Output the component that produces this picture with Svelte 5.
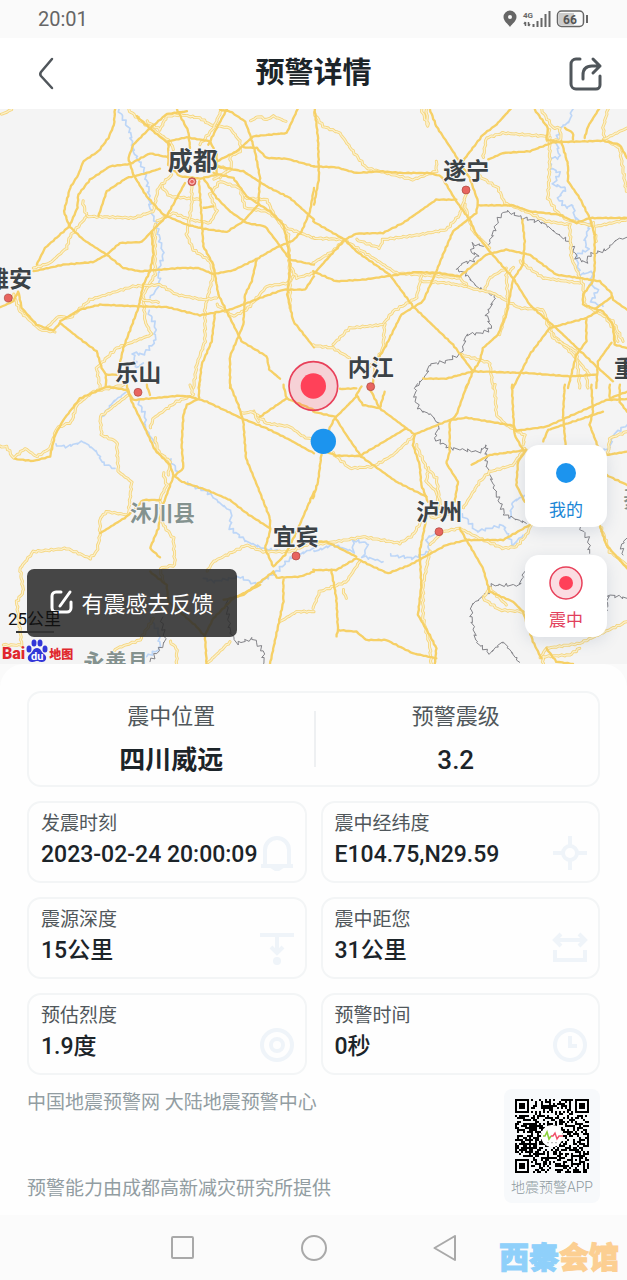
<script lang="ts">
    // map data is split in four tiles, coordinates are thirds of a pixel
    const tiles = [
        {
            x: 0,
            y: 0,
            major: [
                "345,3 342,50 325,90 295,130 250,160 235,200 210,240 192,310 208,355 250,395 320,440 370,480 420,490 540,480 595,480 640,498 700,487 770,453 830,418 880,397 905,370 930,310 942,240",
                "110,470 135,420 208,355 232,300 235,260 270,215 330,175 390,168 450,136 505,148",
                "100,490 190,470 280,462 320,440 360,405 425,402 460,365 500,325 555,225",
                "295,325 320,250 380,210 440,195 480,182",
                "560,10 500,18 440,70 400,110 385,150 400,200 440,265 490,320 560,350 610,362 680,372 730,340 775,290 780,210 765,130 750,80 735,40 690,10 660,5",
                "505,100 560,88 630,100 650,140 650,200 600,212 540,205 505,170 505,100",
                "530,3 565,70 570,120",
                "410,25 460,70 510,110",
                "680,5 650,60 625,110",
                "893,3 860,75 760,85 710,130 650,160",
                "730,118 770,120 800,150 860,152 942,175",
                "650,175 730,190 800,235 870,270 942,335",
                "610,210 650,270 690,310 740,345 795,355 830,400 870,455 942,470",
                "640,195 700,210 740,265 810,310 850,350 865,420 870,480 862,560 880,640 942,718",
                "597,220 605,330 610,415 640,470 655,560 690,630 725,700 800,745 808,785 840,812",
                "770,455 755,520 735,560 730,650 690,745 690,840",
                "455,375 460,440 450,490 430,530 415,600 370,720 360,765",
                "180,640 240,605 300,590 415,595 500,597 600,622 690,605 780,570 850,545 915,545 942,505",
                "0,598 40,580 55,550 65,600 110,650 160,668 180,645 230,685 290,730 305,780 318,800 360,800",
                "318,800 318,840",
                "645,615 635,700 605,770 597,840",
                "610,300 640,295",
            ],
            minor: [
                "3,20 35,5",
                "385,5 430,45 510,100 520,125",
                "440,40 480,65 500,25 540,20 600,30 630,50 690,60 720,100 722,130 690,145 695,180 660,210",
                "665,5 640,60 600,110",
                "750,40 775,25 800,35 820,25 858,40",
                "248,280 260,325 210,385 200,420 150,465 100,480",
                "260,325 400,330 460,310 475,240 515,200",
                "485,235 510,265 600,275",
                "470,340 520,315 570,335 630,345 650,310 630,260 660,220 720,240 735,300 800,310 830,330 860,360 942,390",
                "575,220 575,290 560,380 580,425 630,460 640,500 615,600 615,700 590,770 580,840",
                "465,350 465,500 430,560 435,640 455,680 350,720 290,780 300,840",
                "140,660 175,625 210,630 270,575 400,535 480,530 530,560 610,575 650,570",
                "650,590 700,625 740,605 800,535 865,525 885,500",
                "870,470 890,510 942,495",
                "735,270 800,275 825,325 865,380 870,530 870,600",
                "40,560 60,610 120,665 165,672",
                "425,575 475,583",
                "640,215 690,185 640,170",
            ],
            rivers: [
                "355,3 390,70 400,130 430,180 445,240 450,300 470,350 480,400 490,440 475,490 480,530 450,570",
                "445,610 465,650 465,700 430,740 400,735 410,780 430,765",
            ],
            borders: [],
        },
        {
            x: 939,
            y: 0,
            major: [
                "5,3 15,90 18,210 3,290",
                "0,175 70,178 130,195 200,190 270,195 350,195 385,205 430,280 470,335 490,380 530,430 600,510 650,590 700,635 740,670 850,775 900,820",
                "350,3 370,55 420,130 470,210 495,280 490,315 420,370 390,440 370,490 330,580 265,620 215,720 190,760",
                "593,3 550,50 510,80 445,165",
                "525,155 570,135 650,130 720,103 870,98 920,110 942,150",
                "665,5 705,60 700,95 740,102",
                "858,3 825,55 815,90",
                "745,100 765,170 765,220 800,270 830,330 845,380 845,480 840,520 810,560 810,590 870,610 900,650 905,710 942,720",
                "755,60 780,75 780,95",
                "495,292 600,292 650,310 740,320 790,345 830,330 942,330",
                "0,340 95,395 130,430 230,500 300,595 420,710 480,790",
                "0,500 95,395 130,377 210,375 270,345 370,275 430,275",
                "0,490 70,520 150,515 310,492 380,495 440,505 520,440 580,425 650,440 730,500 800,510 860,520 895,555 900,575 942,605",
                "895,568 850,600",
                "628,335 635,400 630,470 600,515 580,620 555,680 510,720 500,760 480,790 460,840",
                "330,812 400,812 480,790 640,795 770,805 850,800",
                "600,840 650,740 710,660 820,630 855,610",
                "820,635 820,700 790,740 765,840",
                "895,705 855,760 850,840",
                "185,770 180,830",
            ],
            minor: [
                "3,15 30,55 80,75 120,130 160,180 260,205 300,215 370,190 370,160",
                "510,150 520,90 570,75 700,85",
                "685,5 720,60 740,60 745,95 705,100 710,65",
                "885,3 870,60 875,95 920,120 940,250",
                "870,95 942,60",
                "710,90 710,170 705,270 730,310 760,335 850,355 942,335",
                "500,205 555,240 575,285 640,310 700,340 770,350",
                "0,390 95,395 60,430 0,465",
                "130,395 200,420 210,395 320,380 400,365 440,320 465,240",
                "100,400 180,450 250,495 320,500 440,510 470,540 540,555 620,600 690,605 720,680 780,740 830,800",
                "325,505 310,570 240,610 210,650 110,660 60,710",
                "0,712 60,720 110,750",
                "325,520 400,525 460,535",
                "215,650 210,720 190,760 150,790",
                "600,480 580,500 585,590 560,680",
                "620,460 690,510 800,525",
                "515,545 530,510 580,480",
                "770,350 775,450 810,530 815,590 900,640 930,700",
                "700,640 720,690 790,730 800,840",
                "820,800 825,840",
                "445,740 530,765 540,840",
                "325,3 345,55 340,5",
                "840,345 850,400",
                "455,290 480,370 530,420",
                "880,630 900,660 915,700",
            ],
            rivers: [
                "778,5 770,40 740,60 730,100 740,150 710,150 712,180 740,195 720,230 760,240 735,270 760,300 780,290 785,330 830,350 815,400 825,425 790,440 800,500 840,490 830,530 855,545 835,580 870,595",
            ],
            borders: [
                "942,390 910,395 880,425 830,440 820,465 790,450 775,405 730,375 690,345 630,330 580,308 560,325 545,365 525,415 480,408 475,435 495,440 480,460 450,465 430,485 455,495 490,535 548,565 520,620 535,660 510,675 460,680 445,735 400,760 350,770 340,800 310,835",
            ],
        },
        {
            x: 0,
            y: 831,
            major: [
                "45,222 100,228 150,215 165,150 190,105 240,40 320,5 380,15 400,45 540,32 570,35 620,50 725,100 800,130 870,165 942,205",
                "380,0 395,50 435,130 465,195 510,240 520,270 545,290 620,315 690,345 740,385 810,430",
                "597,0 597,40 560,60 550,90 545,180 550,250 520,275 485,370 475,430 450,490 480,517",
                "690,0 715,60 730,110 738,220 775,310 810,400 810,440 795,490 820,545 855,510 890,440 942,320",
                "440,0 450,30",
                "850,0 860,40 780,95",
                "860,40 942,75",
                "300,445 380,395 430,345 480,345",
                "670,645 730,630 820,560 830,578 900,575 942,560",
                "850,585 850,650 835,720 810,837",
                "450,560 500,600 505,650 590,725 615,755 620,837",
                "780,600 700,640 640,700 615,750",
            ],
            minor: [
                "0,185 20,185 40,220 75,190 110,215 150,190 170,130 215,110 230,60 280,20 370,0",
                "385,30 300,95 305,150 350,170 355,260 395,290 385,390 320,380 300,400 300,450 290,500 270,520 200,490 100,500 60,550 70,620 50,650 65,780 10,780",
                "450,130 460,100 530,50 580,30 570,0",
                "760,80 800,115 870,125 910,155 942,165",
                "490,265 500,300 480,340 490,420 520,460 525,540 480,550 490,590",
                "620,560 640,530 740,480 790,500 870,500 942,470",
                "330,810 350,790 420,765 460,700",
                "510,770 530,790 530,837",
                "620,837 690,770",
                "840,710 890,680 942,680",
                "465,160 475,200 510,230 505,270",
                "725,85 760,80 775,110",
            ],
            rivers: [
                "165,180 200,185 250,170 290,200 310,235 345,250",
                "375,25 340,50 305,95",
                "415,50 435,90 435,130 465,175",
                "510,225 535,260",
                "560,295 620,320 660,355 695,380 690,430 740,470 790,490 850,500",
                "942,490 870,520 830,560 770,600 720,575 640,590 610,580",
                "450,700 475,740 480,790 440,815",
            ],
            borders: [
                "680,650 685,700 690,740 710,775 760,760 790,800 790,837",
                "485,700 495,770 450,830",
            ],
        },
        {
            x: 939,
            y: 831,
            major: [
                "0,80 65,95 100,150 145,215 250,290 340,335",
                "145,5 130,30 150,60 200,70 215,20",
                "80,12 130,10",
                "130,35 65,100 40,150",
                "170,10 200,70 305,148 300,180 320,240 325,300 345,350",
                "305,148 410,105 460,98 600,122 610,137 700,125 790,85 880,45 942,42",
                "40,200 70,212 140,213 280,130",
                "25,210 15,290 0,340",
                "462,0 430,90 410,110 410,200 400,235 435,290 425,350",
                "597,0 600,80 605,150 630,195",
                "475,240 530,210 640,195 615,230 610,300 635,350",
                "755,0 750,90 758,185",
                "690,170 705,135 870,80",
                "835,0 840,80 830,120 855,185",
                "880,210 942,200",
                "880,270 942,300",
                "890,0 890,40 942,20",
                "920,0 920,50 942,80",
                "0,555 70,555 130,520 170,540 225,565 290,540 400,480 460,465 570,465 650,420",
                "0,470 40,470 80,490 130,515",
                "340,400 320,500 325,600 315,690 350,750 370,790 365,837",
                "440,430 510,550 530,620 600,650 630,680 660,770 685,820",
                "70,755 75,735 130,740 160,765 220,765 300,805 370,820",
                "55,555 70,640 75,735",
                "860,420 880,480 942,550",
                "700,790 730,830 780,837",
            ],
            minor: [
                "60,205 110,250 180,245 240,210 305,150",
                "310,180 345,260 340,290 370,320 380,370",
                "345,250 370,280 382,360",
                "450,370 500,290 530,260 600,240 635,190",
                "545,0 550,90 580,120 635,150 630,180",
                "0,480 100,465 150,455 260,475 300,450 330,400",
                "350,480 390,440 440,430 500,460 570,490 610,485 640,450 655,420",
                "140,530 100,590 20,620 0,670",
                "90,615 100,640",
                "350,500 330,600 330,700 350,780 355,837",
                "510,640 530,610 580,660",
                "510,640 560,675 630,680",
                "680,820 700,790 800,775 942,710",
                "690,837 690,815 770,810 800,790",
                "885,210 890,160 942,140",
                "865,430 890,500 942,540",
                "340,370 360,400 420,380",
            ],
            rivers: [
                "0,500 60,480 120,500 120,465 165,475 150,515 210,530",
                "230,510 300,520 350,500 340,460 380,440",
                "445,390 460,400 490,440 570,420 600,480 630,450",
                "640,330 600,350 590,400",
                "870,195 890,190 900,150 942,120",
            ],
            borders: [
                "310,0 305,40 320,75 355,90 380,120 365,160 410,190 500,200 520,180 520,240 545,310 575,390 640,415",
                "800,425 825,460 830,505",
                "635,560 620,600 530,600 525,625 475,660 475,700 490,770 530,805 570,770 620,832",
                "880,680 885,630 942,640",
                "942,460 925,480 930,510",
            ],
        },
    ];

    const cities = [
        { name: "成都", x: 503, y: 186, size: 75, dot: [576, 221] },
        { name: "遂宁", x: 1330, y: 213, size: 69, dot: [1398, 246] },
        { name: "雅安", x: -42, y: 537, size: 69, dot: [25, 570] },
        { name: "乐山", x: 346, y: 820, size: 69, dot: [414, 853] },
        { name: "内江", x: 1043, y: 803, size: 69, dot: [1112, 836] },
        { name: "宜宾", x: 818, y: 1311, size: 69, dot: [888, 1344] },
        { name: "泸州", x: 1249, y: 1237, size: 69, dot: [1317, 1271] },
        { name: "重庆", x: 1842, y: 808, size: 69 },
    ];

    const counties = [
        { name: "沐川县", x: 390, y: 1238 },
        { name: "永善县", x: 250, y: 1687 },
        { name: "綦江", x: 1870, y: 1196 },
    ];

    // breaks every segment up so that rivers and borders look winding
    function winding(points: string, size: number) {
        const list = points.split(" ").map((p) => p.split(",").map(Number));
        const out: string[] = [];
        let n = 0;
        for (let i = 0; i < list.length - 1; i++) {
            const [ax, ay] = list[i];
            const [bx, by] = list[i + 1];
            const steps = Math.max(2, Math.round(Math.hypot(bx - ax, by - ay) / 8));
            for (let j = 0; j < steps; j++) {
                n++;
                const x = ax + ((bx - ax) * j) / steps + Math.sin(n * 2.3) * size;
                const y = ay + ((by - ay) * j) / steps + Math.cos(n * 3.7) * size;
                out.push(`${x.toFixed(1)},${y.toFixed(1)}`);
            }
        }
        out.push(list[list.length - 1].join(","));
        return out.join(" ");
    }

    // QR code, 37 x 37 modules
    const qrSize = 37;

    function finder(x: number, y: number) {
        const d = Math.max(Math.abs(x - 3), Math.abs(y - 3));
        return d !== 2 && d !== 4;
    }

    function isDark(x: number, y: number) {
        const far = qrSize - 8;
        if (x < 8 && y < 8) return finder(x, y);
        if (x >= far && y < 8) return finder(x - far - 1, y);
        if (x < 8 && y >= far) return finder(x, y - far - 1);
        const a = Math.max(Math.abs(x - 30), Math.abs(y - 30));
        if (a < 3) return a !== 1;
        if (x === 6 || y === 6) return (x + y) % 2 === 0;
        const r = Math.sin(x * 12.9898 + y * 78.233) * 43758.5453;
        return r - Math.floor(r) < 0.52;
    }

    let qrPath = "";
    for (let y = 0; y < qrSize; y++) {
        for (let x = 0; x < qrSize; x++) {
            if (isDark(x, y)) qrPath += `M${x} ${y}h1v1h-1z`;
        }
    }

    const details = [
        { label: "发震时刻", value: "2023-02-24 20:00:09", icon: "bell" },
        { label: "震中经纬度", value: "E104.75,N29.59", icon: "target" },
        { label: "震源深度", value: "15公里", icon: "depth" },
        { label: "震中距您", value: "31公里", icon: "distance" },
        { label: "预估烈度", value: "1.9度", icon: "rings" },
        { label: "预警时间", value: "0秒", icon: "clock" },
    ];
</script>

<div class="page">
    <div class="status">
        <span>20:01</span>
        <svg width="86" height="24" viewBox="0 0 86 24" aria-hidden="true">
            <path
                d="M7 3.500a6.500 6.500 0 0 0-6.500 6.500c0 4 4.500 7 6.500 10 2-3 6.500-6 6.500-10a6.500 6.500 0 0 0-6.500-6.500z"
                fill="#666"
            />
            <circle cx="7" cy="10" r="2" fill="#fafafa" />
            <text x="20" y="11" font-size="8" font-weight="700" fill="#666">4G</text>
            <path
                d="M22.500 15v4M21 17l1.500-2M25.500 15v4M27 17l-1.500 2"
                stroke="#666"
                stroke-width="1.500"
                fill="none"
            />
            <path
                d="M30.500 17v3M34.500 14v6M38.500 11v9M42.500 7v13M46.500 4v16"
                stroke="#666"
                stroke-width="2"
            />
            <rect x="56" y="6" width="15" height="12" fill="#ccc" />
            <rect
                x="54.500"
                y="4"
                width="26"
                height="15.500"
                rx="4"
                fill="none"
                stroke="#666"
                stroke-width="1.500"
            />
            <path d="M84 8v8" stroke="#666" stroke-width="2" />
            <text x="60" y="16.500" font-size="12" font-weight="700" fill="#555">66</text>
        </svg>
    </div>

    <header>
        <button class="icon-button" aria-label="返回">
            <svg width="36" height="36" viewBox="0 0 36 36">
                <path
                    d="M28 3L17 16q-1.500 2 0 4L28 32"
                    fill="none"
                    stroke="#50565b"
                    stroke-width="2.500"
                    stroke-linecap="round"
                />
            </svg>
        </button>
        <h1>预警详情</h1>
        <button class="icon-button" aria-label="分享">
            <svg width="36" height="36" viewBox="0 0 36 36">
                <g
                    fill="none"
                    stroke="#50565b"
                    stroke-width="3"
                    stroke-linecap="round"
                    stroke-linejoin="round"
                >
                    <path d="M13 3H9a5 5 0 0 0-5 5v20a5 5 0 0 0 5 5h20a4 4 0 0 0 4-4v-9" />
                    <path d="M16 23v-4q0-9 9-9h8M26 3l7 7-7 7" />
                </g>
            </svg>
        </button>
    </header>

    <div class="map">
        <svg class="canvas" viewBox="0 3 1881 1665" preserveAspectRatio="xMidYMid slice">
            {#each tiles as tile}
                <g transform="translate({tile.x} {tile.y})" class="lines">
                    {#each tile.rivers as points}
                        <polyline class="river" points={winding(points, 4)} />
                    {/each}
                    {#each tile.borders as points}
                        <polyline class="border" points={winding(points, 5)} />
                    {/each}
                    {#each tile.minor as points}
                        <polyline class="minor" points={winding(points, 2)} />
                        <polyline class="minor-core" points={winding(points, 2)} />
                    {/each}
                    {#each tile.major as points}
                        <polyline class="major" points={winding(points, 1)} />
                    {/each}
                </g>
            {/each}

            {#each counties as c}
                <text class="county" x={c.x} y={c.y}>{c.name}</text>
            {/each}
            {#each cities as c}
                {#if c.dot}
                    <circle class="dot" cx={c.dot[0]} cy={c.dot[1]} r="12" />
                {/if}
                <text class="city" x={c.x} y={c.y} font-size={c.size}>{c.name}</text>
            {/each}
            <circle cx="576" cy="221" r="7" fill="none" stroke="#fff" stroke-width="2" />

            <circle cx="940" cy="834" r="73" fill="#ff4560" fill-opacity="0.2" stroke="#e8405a" stroke-width="5" />
            <circle cx="940" cy="834" r="38" fill="#ff4159" />
            <circle cx="970" cy="1000" r="38" fill="#1c94ee" />
        </svg>

        <button class="feedback">
            <svg width="24" height="26" viewBox="0 0 24 26">
                <g
                    fill="none"
                    stroke="#fff"
                    stroke-width="3"
                    stroke-linecap="round"
                    stroke-linejoin="round"
                >
                    <path d="M11 3H6a4 4 0 0 0-4 4v12a4 4 0 0 0 4 4h11a4 4 0 0 0 4-4v-6" />
                    <path d="M20 3L10 17" />
                </g>
            </svg>
            有震感去反馈
        </button>

        <div class="scale">25公里</div>

        <div class="baidu">
            <span>Bai</span>
            <svg width="22" height="24" viewBox="0 0 22 24">
                <g fill="#3236d8">
                    <ellipse cx="3" cy="10" rx="2.500" ry="3.500" />
                    <ellipse cx="8" cy="4" rx="2.500" ry="3.500" />
                    <ellipse cx="14" cy="4" rx="2.500" ry="3.500" />
                    <ellipse cx="19" cy="10" rx="2.500" ry="3.500" />
                    <path d="M11 9c4 0 4 4 7 6 4 3 2 8-2 8-3 0-3-1-5-1s-2 1-5 1c-4 0-6-5-2-8 3-2 3-6 7-6z" />
                </g>
                <text x="5" y="21" font-size="11" font-weight="700" fill="#fff">du</text>
            </svg>
            <span class="small">地图</span>
        </div>

        <div class="locate">
            <button class="mine">
                <svg width="36" height="36" viewBox="0 0 36 36">
                    <circle cx="18" cy="18" r="10" fill="#1c94ee" />
                </svg>
                我的
            </button>
            <button class="center">
                <svg width="36" height="36" viewBox="0 0 36 36">
                    <circle cx="18" cy="18" r="16" fill="#fbdde2" stroke="#e8405a" stroke-width="1.500" />
                    <circle cx="18" cy="18" r="7" fill="#ff4159" />
                </svg>
                震中
            </button>
        </div>
    </div>

    <main>
        <section class="summary">
            <div>
                <p>震中位置</p>
                <strong>四川威远</strong>
            </div>
            <div>
                <p>预警震级</p>
                <strong class="number">3.2</strong>
            </div>
        </section>

        <section class="details">
            {#each details as d}
                <div class="card">
                    <p>{d.label}</p>
                    <svg class="mark" width="36" height="36" viewBox="0 0 36 36" aria-hidden="true">
                        {#if d.icon === "bell"}
                            <path d="M6 31V15a12 12 0 0 1 24 0v16M2 31h32" />
                            <path d="M15 33h6l-3 2z" />
                        {:else if d.icon === "target"}
                            <circle cx="18" cy="18" r="7" />
                            <path d="M18 1v10M18 25v10M1 18h10M25 18h10" />
                        {:else if d.icon === "depth"}
                            <path d="M1 4h34M18 4v17M12 16l6 6 6-6" />
                            <circle class="solid" cx="18" cy="30" r="4" />
                        {:else if d.icon === "distance"}
                            <path d="M3 9h30M9 3L3 9l6 6M27 3l6 6-6 6M3 19v10h30V19" />
                        {:else if d.icon === "rings"}
                            <circle cx="18" cy="18" r="15" />
                            <circle cx="18" cy="18" r="6" />
                        {:else}
                            <circle cx="18" cy="18" r="15" />
                            <path d="M18 9v10h7" />
                        {/if}
                    </svg>
                    <strong>{d.value}</strong>
                </div>
            {/each}
        </section>

        <footer>
            <div class="credits">
                <p>中国地震预警网 大陆地震预警中心</p>
                <p>预警能力由成都高新减灾研究所提供</p>
            </div>
            <div class="qr">
                <svg width="74" height="74" viewBox="0 0 37 37" role="img" aria-label="地震预警APP">
                    <path d={qrPath} shape-rendering="crispEdges" />
                    <circle cx="18.500" cy="18.500" r="5.500" fill="#fff" />
                    <path
                        d="M14 18.500h1l1-2 1 3.500 1-1.500"
                        fill="none"
                        stroke="#8bd03c"
                        stroke-width="0.800"
                    />
                    <path
                        d="M18 18.500h1l1-1.500 1 3 1-1.500h2"
                        fill="none"
                        stroke="#f0506a"
                        stroke-width="0.700"
                    />
                    <path d="M16 21.800h5" stroke="#bbb" stroke-width="0.600" stroke-dasharray="1 1" />
                </svg>
                <span>地震预警APP</span>
            </div>
        </footer>
    </main>

    <nav>
        <button aria-label="最近任务">
            <svg width="26" height="26" viewBox="0 0 26 26">
                <rect x="2" y="2" width="21" height="21" rx="1" />
            </svg>
        </button>
        <button aria-label="主页">
            <svg width="26" height="26" viewBox="0 0 26 26">
                <circle cx="13" cy="13" r="12" />
            </svg>
        </button>
        <button aria-label="后退">
            <svg width="26" height="26" viewBox="0 0 26 26">
                <path d="M23 1v24L2.500 13z" />
            </svg>
        </button>
        <div class="watermark">西秦<span>会馆</span></div>
    </nav>
</div>

<style>
    :global(body) {
        background: #fafafa;
    }

    .page {
        font-family: Roboto, "Noto Sans CJK SC", sans-serif;
        color: #1c2429;
    }

    button {
        display: flex;
        align-items: center;
        justify-content: center;
        padding: 0;
        border: 0;
        background: none;
        font: inherit;
        color: inherit;
        cursor: pointer;
    }

    p,
    h1 {
        margin: 0;
    }

    svg {
        display: block;
        flex: none;
    }

    .status {
        display: flex;
        align-items: center;
        justify-content: space-between;
        height: 38px;
        padding: 0 38px;
        background: #fafafa;
        color: #666;
        font-size: 20px;
    }

    header {
        display: flex;
        align-items: center;
        justify-content: space-between;
        height: 71px;
        padding: 0 24px;
        background: #fff;
    }

    h1 {
        font-size: 29px;
        font-weight: 700;
        line-height: 40px;
        padding-bottom: 2px;
    }

    .map {
        position: relative;
        aspect-ratio: 627 / 555;
        overflow: hidden;
        background: #f4f4f4;
    }

    .canvas {
        width: 100%;
        height: 100%;
    }

    .lines {
        fill: none;
        stroke-linejoin: round;
        stroke-linecap: round;
    }

    .major {
        stroke: #f6d066;
        stroke-width: 7;
    }

    .minor {
        stroke: #f5d57c;
        stroke-width: 9;
    }

    .minor-core {
        stroke: #fbf0cc;
        stroke-width: 4;
    }

    .river {
        stroke: #bdd6f7;
        stroke-width: 5;
    }

    .border {
        stroke: #838388;
        stroke-width: 3;
    }

    .dot {
        fill: #e8655f;
        stroke: #a8443e;
        stroke-width: 2;
    }

    .city,
    .county {
        font-weight: 700;
        fill: #3b4246;
        stroke: #f7f7f7;
        stroke-width: 6;
        paint-order: stroke;
    }

    .county {
        font-size: 65px;
        fill: #84928f;
    }

    .feedback {
        position: absolute;
        left: 27px;
        bottom: 27px;
        gap: 7px;
        width: 210px;
        height: 68px;
        padding-bottom: 2px;
        border-radius: 7px;
        background: rgba(44, 44, 44, 0.87);
        color: #fff;
        font-size: 22px;
    }

    .scale {
        position: absolute;
        left: 8px;
        bottom: 31px;
        color: #111;
        font-size: 17px;
        line-height: 28px;
    }

    .scale::after {
        content: "";
        position: absolute;
        left: 8px;
        bottom: 0;
        width: 38px;
        height: 2px;
        background: #333;
    }

    .baidu {
        position: absolute;
        left: 2px;
        bottom: 1px;
        display: flex;
        align-items: flex-end;
        gap: 1px;
        color: #e0282e;
        font-size: 16px;
        font-weight: 900;
        line-height: 19px;
    }

    .baidu .small {
        font-size: 12px;
        line-height: 16px;
    }

    .locate {
        position: absolute;
        right: 20px;
        bottom: 27px;
        display: flex;
        flex-direction: column;
        gap: 28px;
    }

    .locate button {
        flex-direction: column;
        gap: 7px;
        width: 82px;
        height: 82px;
        padding-top: 4px;
        border-radius: 14px;
        background: #fff;
        box-shadow: 0 4px 16px rgba(60, 90, 130, 0.15);
        font-size: 17px;
        line-height: 24px;
    }

    .mine {
        color: #1a86d6;
    }

    .center {
        color: #e2405c;
    }

    main {
        padding: 27px 27px 12px 27px;
        border-radius: 24px 24px 0 0;
        background: #fefefe;
    }

    .summary {
        display: grid;
        grid-template-columns: 1fr 1fr;
        padding: 10px 0;
        border: 2px solid #f3f5f6;
        border-radius: 14px;
        text-align: center;
    }

    .summary div {
        height: 72px;
    }

    .summary div + div {
        background: linear-gradient(#eef0f2, #eef0f2) left center / 2px 56px no-repeat;
    }

    .summary p {
        color: #50575b;
        font-size: 22px;
        line-height: 28px;
    }

    .summary strong {
        display: block;
        margin-top: 12px;
        font-size: 26px;
        font-weight: 700;
        line-height: 34px;
    }

    .summary .number {
        font-weight: 500;
    }

    .details {
        display: grid;
        grid-template-columns: 1fr 1fr;
        gap: 14px;
        margin-top: 14px;
    }

    .card {
        position: relative;
        padding: 8px 12px;
        border: 2px solid #f3f5f6;
        border-radius: 14px;
    }

    .card p {
        color: #50575b;
        font-size: 19px;
        line-height: 26px;
    }

    .card strong {
        position: relative;
        display: block;
        font-size: 23px;
        font-weight: 500;
        line-height: 36px;
        white-space: nowrap;
    }

    .mark {
        position: absolute;
        right: 10px;
        bottom: 10px;
        fill: none;
        stroke: #eff4f9;
        stroke-width: 4;
    }

    .mark .solid {
        fill: #eff4f9;
        stroke: none;
    }

    footer {
        display: flex;
        justify-content: space-between;
        margin-top: 14px;
    }

    .credits {
        display: flex;
        flex-direction: column;
        justify-content: space-between;
        color: #929da2;
        font-size: 19px;
        line-height: 28px;
    }

    .qr {
        display: flex;
        flex-direction: column;
        align-items: center;
        gap: 2px;
        width: 96px;
        padding: 10px 0 4px;
        border-radius: 8px;
        background: #f7f9fb;
        color: #8e999f;
        font-size: 14px;
        font-weight: 300;
        line-height: 24px;
        white-space: nowrap;
    }

    nav {
        position: relative;
        display: flex;
        align-items: center;
        justify-content: center;
        gap: 105px;
        height: 65px;
        background: #fbfbfb;
    }

    nav svg {
        fill: none;
        stroke: #a9a9a9;
        stroke-width: 2;
        stroke-linejoin: round;
    }

    .watermark {
        position: absolute;
        right: 8px;
        bottom: 0;
        color: #8fd0fa;
        font-size: 30px;
        font-weight: 900;
        line-height: 44px;
        -webkit-text-stroke: 1px currentColor;
    }

    .watermark span {
        color: #fccf92;
    }
</style>
